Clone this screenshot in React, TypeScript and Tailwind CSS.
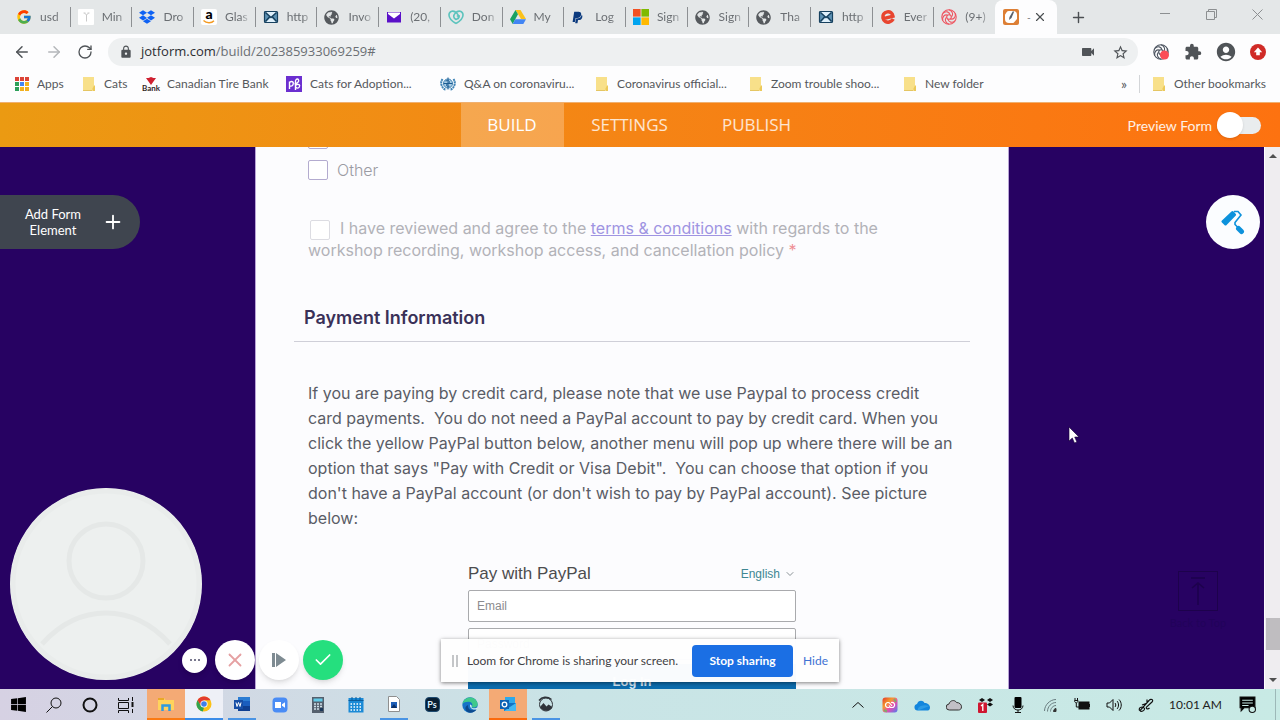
import type { ReactNode } from "react";
import { FcGoogle } from "react-icons/fc";
import { FaDropbox, FaGlobeAmericas, FaPaypal, FaWindows } from "react-icons/fa";
import {
  MdAccountCircle,
  MdExtension,
  MdLock,
  MdStarBorder,
  MdVideocam,
} from "react-icons/md";
import { ArrowLeft, ArrowRight, Check, ChevronDown, Plus, RotateCw, X } from "lucide-react";

function Mail() {
  return (
    <svg viewBox="0 0 16 16" className="size-4">
      <rect x="1.500" y="2.500" width="13" height="11" rx="1" fill="#5f93b5" />
      <path d="M2.500 3h11L8 8.500zM2.500 13h11L8 8z" fill="#dff0fb" />
      <path d="m2.500 3.500 5.500 5 5.500-5M2.500 12.500l4-4.500M13.500 12.500l-4-4.500" fill="none" stroke="#17415f" strokeWidth="1.500" />
      <rect x="1.500" y="2.500" width="13" height="11" rx="1" fill="none" stroke="#17415f" strokeWidth="1.200" />
    </svg>
  );
}

function Amazon() {
  return (
    <span className="flex size-4 flex-col items-center rounded-xs bg-white">
      <span className="h-[11px] text-[14px] leading-[9px] font-black text-black">a</span>
      <svg viewBox="0 0 12 4" className="h-1 w-3" fill="none" stroke="#f39a21" strokeWidth="1.400">
        <path d="M.500.500c3 3 8 3 10.500.300" />
      </svg>
    </span>
  );
}

function YahooMail() {
  return (
    <svg viewBox="0 0 16 16" className="size-4">
      <rect x="1" y="3" width="14" height="10.500" fill="#5a10c8" />
      <path d="M2 3.500h12v1.500L8 9.400 2 5z" fill="#fff" />
    </svg>
  );
}

function Plant() {
  return (
    <svg viewBox="0 0 16 16" className="size-4">
      <rect width="16" height="16" rx="1" fill="#fff" />
      <path d="M8.500 12.500V6M8.500 6 6.500 4M8.500 6l2-2M5.500 4h2M9.500 4h2" stroke="#c9c9c9" fill="none" />
    </svg>
  );
}

function Heart() {
  return (
    <svg viewBox="0 0 16 16" className="size-4" fill="none" stroke="#5cc3bd" strokeWidth="1.600">
      <path d="M8 14.500C3 11.500.800 8.600 1 5.600 1.300 2 5.600.800 8.600 4c2.400 2.600 2.600 4.600 1 6" />
      <path d="M8 14.500c5-3 7.200-5.900 7-8.900C14.700 2 10.400.800 7.400 4c-2.400 2.600-2.200 5 .600 6.500 1.600-.400 3-1.500 3.200-3.500H8.800" />
    </svg>
  );
}

function Drive() {
  return (
    <svg viewBox="0 0 16 16" className="size-4">
      <path d="M5.500 1h5L16 10h-5z" fill="#fbc21c" />
      <path d="M5.500 1 8 5.300 2.700 15 0 10.300z" fill="#1aa260" />
      <path d="M5.300 10.200H16L13.300 15H2.700z" fill="#4285f4" />
    </svg>
  );
}

function Squares() {
  return (
    <svg viewBox="0 0 16 16" className="size-4">
      <path d="M0 0h7.600v7.600H0z" fill="#f25022" />
      <path d="M8.400 0H16v7.600H8.400z" fill="#7fba00" />
      <path d="M0 8.400h7.600V16H0z" fill="#00a4ef" />
      <path d="M8.400 8.400H16V16H8.400z" fill="#ffb900" />
    </svg>
  );
}

function Loom({ color, dot }: { color: string; dot?: boolean }) {
  return (
    <svg viewBox="0 0 16 16" className="size-4" fill="none" stroke={color} strokeWidth="1.100">
      <circle cx="8" cy="8" r="7.200" />
      <path d="M8 .800c4 1.500 4.500 5 2.500 7.200M14.200 4.400c1 4-2 6.500-4.900 5.400M14.200 11.600c-3 3-6.700 1.600-7.200-1.400M8 15.200c-4-1.500-4.500-5-2.500-7.200M1.800 11.600c-1-4 2-6.500 4.900-5.400M1.800 4.400c3-3 6.700-1.600 7.200 1.400" />
      <circle cx="8" cy="8" r="2.300" />
      {dot && <circle cx="11.500" cy="11" r="4.500" fill="#fb4d57" stroke="none" />}
    </svg>
  );
}

function Eventbrite() {
  return (
    <svg viewBox="0 0 16 16" className="size-4" fill="none" stroke="#e8452f" strokeWidth="3.400">
      <path d="M2.500 9.800 13 7.200C12.500 4 10 2.300 7.300 2.800 4 3.400 2.300 6 2.900 9c.700 3.200 3.600 4.700 6.400 4 1.900-.500 3.200-1.500 4-3" />
    </svg>
  );
}

function Jotform() {
  return (
    <svg viewBox="0 0 16 16" className="size-4">
      <rect width="16" height="16" rx="2" fill="#dd7f35" />
      <rect x="2" y="2" width="12" height="12" rx="4" fill="#fff" />
      <path d="M10 2 6.500 8 6 11l2.500-2L11 3z" fill="#59606a" />
      <path d="M2 2h2.500L2 5.500zM14 14h-3.500l3.500-4z" fill="#dd7f35" />
    </svg>
  );
}

function Folder() {
  return (
    <svg viewBox="0 0 14 16" className="h-4 w-3.5">
      <path d="M1 1h11v13.500H1z" fill="#f8e08a" />
      <path d="M12 9.500h1V15h-2.500v-2.500z" fill="#ecc95a" />
      <path d="M1 14.500h9" stroke="#e5c663" />
    </svg>
  );
}

function AppsGrid() {
  const colors = ["#dc4437", "#dc4437", "#dc4437", "#2da05a", "#4285f4", "#f2b01e", "#2da05a", "#f2b01e", "#f2b01e"];
  return (
    <svg viewBox="0 0 14 14" className="size-3.5">
      {colors.map((c, i) => (
        <rect key={i} x={(i % 3) * 5} y={Math.floor(i / 3) * 5} width="4" height="4" fill={c} />
      ))}
    </svg>
  );
}

function TireBank() {
  return (
    <span className="flex w-4 flex-col items-center">
      <svg viewBox="0 0 10 8" className="h-2 w-2.5">
        <path d="M0 1h2.500L5 0l2.500 1H10L5 8z" fill="#cf2030" />
      </svg>
      <span className="text-[8px] leading-[7px] font-bold text-[#33251f]">Bank</span>
    </span>
  );
}

function Petfinder() {
  return (
    <svg viewBox="0 0 16 16" className="size-4">
      <rect width="16" height="16" fill="#6b2fd0" />
      <g fill="none" stroke="#fff" strokeWidth="1.400">
        <path d="M3.500 13V5.500M3.500 6.300c3-2 4.500 0 3.500 2.500-.500 1.300-2 1.500-3.500 1" />
        <path d="M9.500 14V5.500c0-3.500 4-3 3 0-.500 1.500-2 2-4 2.500M9.800 9c3-1.500 4.500 0 3.500 2-.800 1.500-2.500 1.300-3.500.300" />
      </g>
    </svg>
  );
}

function Who() {
  return (
    <svg viewBox="0 0 16 16" className="size-4" fill="none" stroke="#3f83b5">
      <circle cx="8" cy="7.500" r="4.500" fill="#a9cde5" />
      <path d="M2.500 3C0 6.500 1 11.500 6 14M13.500 3c2.500 3.500 1.500 8.500-3.500 11" strokeWidth="2" strokeDasharray="2 .600" />
      <path d="M8 1.500v12M5.500 5c3-1 4 0 4 1.200S6.500 7.500 6.500 9 8 10.300 9.500 10.300M3.500 7.500h9" stroke="#1c5c92" />
    </svg>
  );
}

const tabs: { title: string; icon: ReactNode }[] = [
  { title: "usd", icon: <FcGoogle className="size-4" /> },
  { title: "Min", icon: <Plant /> },
  { title: "Dro", icon: <FaDropbox className="size-4 text-[#0f62f4]" /> },
  { title: "Glas", icon: <Amazon /> },
  { title: "http", icon: <Mail /> },
  { title: "Invo", icon: <FaGlobeAmericas size={15} className="text-[#55595d]" /> },
  { title: "(20,", icon: <YahooMail /> },
  { title: "Don", icon: <Heart /> },
  { title: "My", icon: <Drive /> },
  { title: "Log", icon: <FaPaypal size={13} className="text-[#0b3a7e]" /> },
  { title: "Sign", icon: <Squares /> },
  { title: "Sign", icon: <FaGlobeAmericas size={15} className="text-[#55595d]" /> },
  { title: "Tha", icon: <FaGlobeAmericas size={15} className="text-[#55595d]" /> },
  { title: "http", icon: <Mail /> },
  { title: "Ever", icon: <Eventbrite /> },
  { title: "(9+)", icon: <Loom color="#ee5560" /> },
];

const bookmarks: { title: string; icon: ReactNode; width: string }[] = [
  { title: "Apps", icon: <AppsGrid />, width: "w-[67px]" },
  { title: "Cats", icon: <Folder />, width: "w-[61px]" },
  { title: "Canadian Tire Bank", icon: <TireBank />, width: "w-[143px]" },
  { title: "Cats for Adoption...", icon: <Petfinder />, width: "w-[154px]" },
  { title: "Q&A on coronaviru...", icon: <Who />, width: "w-[155px]" },
  { title: "Coronavirus official...", icon: <Folder />, width: "w-[154px]" },
  { title: "Zoom trouble shoo...", icon: <Folder />, width: "w-[154px]" },
  { title: "New folder", icon: <Folder />, width: "w-[120px]" },
];

function TabStrip() {
  return (
    <div className="flex h-[34px] shrink-0 bg-[#e4e7e8] pl-[9px] text-[#6b6f73]">
      <div className="flex min-w-0 flex-[0_1_986px] items-center">
        {tabs.map((tab, i) => (
          <button
            key={i}
            className={`flex h-5 min-w-0 flex-1 items-center pl-[7px] text-[12px] ${
              i < tabs.length - 1 ? "border-r border-[#8d9093]" : ""
            }`}
          >
            <span className="flex w-6 shrink-0">{tab.icon}</span>
            <span className="w-[26px] mask-r-from-60% text-left whitespace-nowrap">{tab.title}</span>
          </button>
        ))}
      </div>
      <div className="flex w-[62px] shrink-0 items-center rounded-t-lg bg-[#fdfdfe] pl-2">
        <Jotform />
        <span className="w-[14px] pl-2 text-[10px]">-</span>
        <button aria-label="Close tab" className="text-[#4b4f52]">
          <X size={14} strokeWidth={2} />
        </button>
      </div>
      <button aria-label="New tab" className="ml-[13px] text-[#4b4f52]">
        <Plus size={17} strokeWidth={2} />
      </button>
      <div className="ml-auto flex h-7 items-center text-[#8c8f91]">
        <button aria-label="Minimize" className="flex w-[46px] justify-center">
          <svg viewBox="0 0 10 10" className="size-[10px]" stroke="currentColor"><path d="M0 4.500h10" /></svg>
        </button>
        <button aria-label="Restore" className="flex w-[46px] justify-center">
          <svg viewBox="0 0 11 11" className="size-[11px]" fill="none" stroke="currentColor"><path d="M.500 2.500h8v8h-8zM2.500 2.500v-2h8v8h-2" /></svg>
        </button>
        <button aria-label="Close" className="flex w-[46px] justify-center">
          <svg viewBox="0 0 11 11" className="size-[11px]" stroke="currentColor"><path d="m.500.500 10 10M10.500.500l-10 10" /></svg>
        </button>
      </div>
    </div>
  );
}

function Toolbar() {
  return (
    <div className="flex h-9 shrink-0 items-center bg-[#fdfdfe] pr-[14px] pl-[13px] text-[#505458]">
      <button aria-label="Back" className="w-8"><ArrowLeft size={18} /></button>
      <button aria-label="Forward" className="w-8 text-[#b4b7ba]"><ArrowRight size={18} /></button>
      <button aria-label="Reload" className="w-[31px]"><RotateCw size={16} /></button>
      <div className="flex h-7 flex-1 items-center rounded-full bg-[#eef0f1] pr-[9px] pl-[11px]">
        <MdLock size={14} className="mr-2" />
        <span className="flex-1 font-['Open_Sans',sans-serif] text-[13px] text-[#6b6f74]">
          <span className="text-[#2b2e32]">jotform.com</span>/build/202385933069259#
        </span>
        <MdVideocam size={16} className="mr-4" />
        <MdStarBorder size={17} />
      </div>
      <div className="flex items-center gap-[15px] pl-[15px]">
        <Loom color="#4d5561" dot />
        <MdExtension size={18} />
        <MdAccountCircle size={22} className="-mx-0.5" />
        <svg viewBox="0 0 16 16" className="size-4">
          <circle cx="8" cy="8" r="8" fill="#d02b27" />
          <path d="m8 3.500 4.200 4.700H9.800v3H6.200v-3H3.800z" fill="#fff" />
        </svg>
      </div>
    </div>
  );
}

function BookmarkBar() {
  return (
    <div className="flex h-8 shrink-0 items-center bg-[#fdfdfe] pr-[14px] pb-1 pl-[15px] text-[12px] text-[#55585c]">
      {bookmarks.map((b) => (
        <a key={b.title} href="#" className={`flex shrink-0 items-center gap-2 whitespace-nowrap ${b.width}`}>
          {b.icon}
          {b.title}
        </a>
      ))}
      <button aria-label="More bookmarks" className="ml-auto w-[18px] text-left text-[14px] leading-4">»</button>
      <a href="#" className="flex items-center gap-2 border-l border-[#d3d5d8] pl-3 whitespace-nowrap">
        <Folder />
        Other bookmarks
      </a>
    </div>
  );
}

function BuilderHeader() {
  return (
    <header className="flex h-[45px] shrink-0 items-center border-t border-[#f0b070] bg-linear-to-r from-[#eb9a12] via-[#f58415] to-[#fd7210] text-white">
      <div className="flex-1" />
      <nav className="flex h-full items-center pl-[17px] font-['Open_Sans',sans-serif] text-[17px]">
        <a href="#" className="flex h-full w-[103px] items-center justify-center bg-white/25">BUILD</a>
        <a href="#" className="flex h-full w-[132px] items-center justify-center text-white/80">SETTINGS</a>
        <a href="#" className="flex h-full w-[122px] items-center justify-center text-white/80">PUBLISH</a>
      </nav>
      <div className="flex flex-1 justify-end pr-[19px]">
        <label className="flex items-center gap-[5px] text-[14px] text-white/90">
          Preview Form
          <input type="checkbox" className="peer sr-only" />
          <span className="flex h-[17px] w-11 items-center rounded-full bg-[#e9ecee]">
            <span className="size-[26px] shrink-0 rounded-full bg-white shadow" />
          </span>
        </label>
      </div>
    </header>
  );
}

const box = "size-5 shrink-0 appearance-none rounded-xs border bg-white";

function FormCard() {
  return (
    <section className="mx-auto h-full w-[754px] overflow-hidden border-x border-[#b9a4d6] bg-[#fcfcfe] px-[38px] font-['Inter',sans-serif]">
      <div className="-mt-[18px] flex flex-col gap-[11px] pl-[14px] text-[16px] leading-5 font-light text-[#9b9ba3]">
        <input type="checkbox" aria-label="Option" className={`${box} border-[#b3abcf]`} />
        <label className="flex items-center gap-[9px]">
          <input type="checkbox" className={`${box} border-[#b3abcf]`} />
          Other
        </label>
      </div>
      <p className="mt-[38px] pl-[14px] text-[16px] leading-[21px] text-[#b2b2b8]">
        <input id="agree" type="checkbox" className={`${box} mr-[10px] ml-0.5 border-[#dcdce2] align-middle`} />
        <label htmlFor="agree">
          I have reviewed and agree to the{" "}
          <a href="#" className="text-[#9f94e2] underline">terms &amp; conditions</a> with regards to the
          <br />
          workshop recording, workshop access, and cancellation policy <span className="text-[#ef8f95]">*</span>
        </label>
      </p>
      <h2 className="mt-[45px] border-b border-[#cfcfd8] pb-[11px] pl-[10px] text-[18px] leading-6 font-semibold text-[#3a3158]">
        Payment Information
      </h2>
      <p className="mt-[39px] pl-[14px] text-[16px] leading-[25px] whitespace-pre-wrap text-[#5a5c66]">
        {`If you are paying by credit card, please note that we use Paypal to process credit
card payments.  You do not need a PayPal account to pay by credit card. When you
click the yellow PayPal button below, another menu will pop up where there will be an
option that says "Pay with Credit or Visa Debit".  You can choose that option if you
don't have a PayPal account (or don't wish to pay by PayPal account). See picture
below:`}
      </p>
      <div className="mx-auto mt-[29px] w-[328px] font-['Liberation_Sans',sans-serif]">
        <div className="flex h-7 items-center justify-between">
          <h3 className="text-[17px] text-[#4c4c4e]">Pay with PayPal</h3>
          <button className="flex items-center gap-1 text-[12px] text-[#3f8793]">
            English <ChevronDown size={12} className="text-[#8a9296]" />
          </button>
        </div>
        <input aria-label="Email" placeholder="Email" className="mt-[2px] block h-8 w-full rounded-xs border border-[#a9aaad] bg-white px-2 text-[12px] placeholder:text-[#8b8b8e]" />
        <input aria-label="Password" type="password" placeholder="Password" className="mt-[6px] block h-8 w-full rounded-xs border border-[#a9aaad] bg-white px-2 text-[12px] placeholder:text-[#8b8b8e]" />
        <button className="mt-1 h-9 w-full bg-[#0b6cae] text-[13px] font-bold text-[#d4e5f2]">Log In</button>
      </div>
    </section>
  );
}

function LoomControls() {
  const round = "flex items-center justify-center rounded-full shadow-md";
  return (
    <>
      <svg viewBox="0 0 192 192" className="absolute bottom-[9px] left-[10px] size-48">
        <clipPath id="bubble"><circle cx="96" cy="96" r="96" /></clipPath>
        <g clipPath="url(#bubble)" fill="none" stroke="#e5e8e7" strokeWidth="5">
          <rect width="192" height="192" fill="#edf0ef" stroke="none" />
          <circle cx="96" cy="96" r="93" stroke="#e9eceb" />
          <circle cx="96" cy="73" r="37" />
          <path d="M32 156c18-20 38-31 64-31s46 11 64 31" />
        </g>
      </svg>
      <div className="absolute bottom-[9px] left-[182px] flex items-center gap-1">
        <button aria-label="More" className={`${round} mr-1 size-[25px] gap-0.5 bg-white`}>
          <span className="size-0.5 rounded-full bg-[#4e4c68]" />
          <span className="size-0.5 rounded-full bg-[#4e4c68]" />
          <span className="size-0.5 rounded-full bg-[#4e4c68]" />
        </button>
        <button aria-label="Cancel" className={`${round} size-10 bg-white text-[#e5a0a2]`}><X size={22} /></button>
        <button aria-label="Pause" className={`${round} size-10 bg-white`}>
          <svg viewBox="0 0 14 14" className="size-3.5 text-[#7e8b92]" fill="currentColor"><path d="M0 0h3v14H0zM4 0l10 7-10 7z" /></svg>
        </button>
        <button aria-label="Finish" className={`${round} size-10 bg-[#25df7e] text-white`}><Check size={20} /></button>
      </div>
    </>
  );
}

function ShareNotice() {
  return (
    <div className="absolute bottom-[7px] left-1/2 flex h-[43px] w-[398px] -translate-x-1/2 items-center bg-[#fefefe]/98 px-[11px] text-[12px] whitespace-nowrap shadow-[0_1px_4px_rgba(0,0,0,0.5)]">
      <span className="mr-[9px] h-3 w-[6px] border-x-2 border-[#c4c6c8]" />
      <span className="text-[#3f4145]">Loom for Chrome is sharing your screen.</span>
      <button className="ml-auto h-8 w-[101px] rounded bg-[#1b6fe4] font-bold text-white">Stop sharing</button>
      <a href="#" className="ml-[10px] text-[#3f72d3]">Hide</a>
    </div>
  );
}

function Scrollbar() {
  return (
    <div className="flex w-4 shrink-0 flex-col items-center justify-between border-l border-white bg-[#efedf0] py-1.5">
      <svg viewBox="0 0 8 5" className="h-[5px] w-2"><path d="m0 5 4-4 4 4z" fill="#505050" /></svg>
      <div className="mt-auto mb-7 h-8 w-[14px] bg-[#bfbdc0]" />
      <svg viewBox="0 0 8 5" className="h-[5px] w-2"><path d="m0 0 4 4 4-4z" fill="#505050" /></svg>
    </div>
  );
}

function Builder() {
  return (
    <main className="relative flex min-h-0 flex-1 bg-[#270262]">
      <div className="min-w-0 flex-1"><FormCard /></div>
      <Scrollbar />
      <button className="absolute top-12 left-0 flex h-[54px] w-[140px] items-center gap-5 rounded-r-full bg-[#3f454f] pl-[22px] text-[13px] leading-4 text-white">
        <span className="w-[62px] text-center">Add Form Element</span>
        <Plus size={22} className="-ml-0.5 shrink-0" />
      </button>
      <button aria-label="Form designer" className="absolute top-12 right-5 flex size-[54px] items-center justify-center rounded-full bg-[#fbfdff]">
        <svg viewBox="0 0 24 26" className="h-[26px] w-6">
          <path d="M2 12.500 11.500 3.500l2 2.200L4.500 15z" fill="#0d92dc" stroke="#0d92dc" strokeWidth="3" strokeLinejoin="round" />
          <path d="M13 2.500h4l3 3.500-6 7.500v2l3 3" fill="none" stroke="#0d92dc" strokeWidth="1.600" />
          <path d="m17.500 19.500 3 3" stroke="#0d92dc" strokeWidth="5" strokeLinecap="round" />
        </svg>
      </button>
      <div className="absolute right-[50px] bottom-[58px] flex w-16 flex-col items-center gap-1 text-[11px] text-[#22025a]">
        <button aria-label="Back to top" className="flex size-10 items-center justify-center border border-[#1d024c]">
          <svg viewBox="0 0 14 28" className="h-7 w-3.5" fill="none" stroke="#1d024c" strokeWidth="1.500"><path d="M0 1h14M7 28V6M1 11l6-5 6 5" /></svg>
        </button>
        Back to Top
      </div>
      <LoomControls />
      <ShareNotice />
      <svg viewBox="0 0 12 18" className="absolute top-[279px] right-[200px] h-[18px] w-3">
        <path d="M1 1v14l3.300-3 2.200 5 2.400-1-2.200-5H11z" fill="#fff" stroke="#150038" strokeWidth=".6" />
      </svg>
    </main>
  );
}

function Tile({ children, className = "" }: { children: ReactNode; className?: string }) {
  return <button className={`flex h-full w-[38px] shrink-0 items-center justify-center ${className}`}>{children}</button>;
}

// running apps show a short bar under their icon
function RunningTile({ children }: { children: ReactNode }) {
  return (
    <button className="mx-[5px] flex h-full w-7 shrink-0 items-center justify-center border-b-2 border-[#4a94e4]">
      {children}
    </button>
  );
}

function Glyph({ children, color = "#111", size = "size-4" }: { children: ReactNode; color?: string; size?: string }) {
  return <svg viewBox="0 0 16 16" className={size} fill="none" stroke={color}>{children}</svg>;
}

function Taskbar() {
  return (
    <footer className="flex h-[31px] shrink-0 items-center bg-linear-to-r from-[#d6d1e3] via-[#c9e4e6] via-45% to-[#c8eae5]">
      <div className="flex h-full items-center">
        <button aria-label="Start" className="flex w-9 justify-center"><FaWindows size={17} className="text-black" /></button>
        <button aria-label="Search" className="flex w-9 justify-center">
          <Glyph><circle cx="10" cy="6" r="5" /><path d="M6.500 9.500.500 15.500" /></Glyph>
        </button>
        <button aria-label="Cortana" className="flex w-9 justify-center">
          <Glyph><circle cx="8" cy="8" r="6.500" strokeWidth="2" /></Glyph>
        </button>
        <button aria-label="Task view" className="flex w-9 justify-center">
          <Glyph><path d="M.500 1v2.500h10V1M.500 5.500h10v6h-10zM.500 16v-2.500h10V16M14.500 0v4M14.500 12v4" /><path d="M14.500 5v5" strokeWidth="2" /></Glyph>
        </button>
      </div>
      <div className="ml-[3px] flex h-full items-center">
        <Tile className="border-b-2 border-[#fb7a13] bg-[#f4aa75]">
          <Glyph><path d="M0 2h6l1.500 2H16v10H0z" fill="#ffd35c" stroke="none" /><path d="M0 2h6v2H0z" fill="#e9a928" stroke="none" /><path d="M4.500 15V9.500h7V15" stroke="#2e9be0" strokeWidth="2.500" /></Glyph>
        </Tile>
        <Tile className="border-b-2 border-[#3c8ce8] bg-[#eef0f7]">
          <Glyph>
            <g stroke="none">
              <circle cx="8" cy="8" r="7.500" fill="#fbc116" />
              <path d="M1.500 4.300A7.500 7.500 0 0 1 14.500 4.300H8L4.800 9.800z" fill="#e33b2e" />
              <path d="M1.500 4.300 5 10l3 1.500-1.200 4A7.500 7.500 0 0 1 1.500 4.300" fill="#31a350" />
              <circle cx="8" cy="8" r="3.600" fill="#fff" /><circle cx="8" cy="8" r="2.800" fill="#3f7fe8" />
            </g>
          </Glyph>
        </Tile>
        <RunningTile>
          <Glyph><g stroke="none"><path d="M4 1h12v14H4z" fill="#2b7cd3" /><path d="M4 5h12v5H4z" fill="#1a5dbe" /><path d="M4 10h12v5H4z" fill="#103f91" /><path d="M0 4h9v9H0z" fill="#174ea6" /></g><path d="m2 6.500 1 4 1.500-4 1.500 4 1-4" stroke="#fff" /></Glyph>
        </RunningTile>
        <Tile>
          <Glyph><rect x=".500" y=".500" width="15" height="15" rx="4" fill="#4a8cf5" stroke="none" /><path d="M3 5h6v6H3zM10 7.200l3-2v5.600l-3-2z" fill="#fff" stroke="none" /></Glyph>
        </Tile>
        <Tile>
          <Glyph><rect x="2" width="12" height="16" fill="#55606e" stroke="none" /><path d="M3.500 1.500h9v3h-9z" fill="#63cbe8" stroke="none" /><path d="M4 7h2m1 0h2m1 0h2M4 9.500h2m1 0h2m1 0h2M4 12h2m1 0h2" stroke="#cfe0ea" strokeWidth="1.600" /><path d="M10 14v-3h3v3z" fill="#1c3759" stroke="none" /></Glyph>
        </Tile>
        <Tile>
          <Glyph><path d="M.500 1h15v14.500H.500z" fill="#1b8ad6" stroke="none" /><path d="M.500 3.500h15M4 0v3M8 0v3M12 0v3" stroke="#0c5d9c" /><path d="M2.500 7h12M2.500 10h12M2.500 13h12" stroke="#fff" strokeWidth="1.500" strokeDasharray="1.500 1.500" /></Glyph>
        </Tile>
        <RunningTile>
          <Glyph><path d="M2.500.500h8l3 3v12h-11z" fill="#fff" stroke="#8f8f8f" /><path d="M5 6h6v6H5z" fill="#1d5fb8" stroke="none" /><path d="m5 12 3-4 3 4z" fill="#0b2f66" stroke="none" /></Glyph>
        </RunningTile>
        <Tile>
          <span className="flex size-[15px] items-center justify-center rounded-sm border border-[#1d4a70] bg-[#071e33] text-[9px] font-bold text-[#dff0ff]">Ps</span>
        </Tile>
        <Tile>
          <Glyph><g stroke="none"><circle cx="8" cy="8" r="7.700" fill="#1673c8" /><path d="M.500 7C1.500-1 14-2 15.700 7c.300 3-3.200 4.500-6 3 1.500-2.500.500-5-3-5.200C4 4.700 1.500 5.500.500 7" fill="#3fc98b" /><path d="M6.200 8c-1 4 3 6.500 8.300 4.500C13 15 8 17 5 14.500S3.500 8.500 6.200 8" fill="#0c4a8e" /><path d="M8 7.500c2 .500 2 2 1.500 3 2 1.500 5 1 6.300-1L15 12c-3 1.500-7.500 0-7-4.500" fill="#d5efef" /></g></Glyph>
        </Tile>
        <Tile className="border-b-2 border-[#fb6a0c] bg-[#f4aa75]">
          <Glyph><g stroke="none"><path d="M5 1h10v8H5z" fill="#2ea8ea" /><path d="M4 7h12v8H4z" fill="#1272c4" /><path d="m4 15 12-8v8z" fill="#42b8f2" /><path d="M0 4h9v9H0z" fill="#0d62b5" /></g><circle cx="4.500" cy="8.500" r="2.300" stroke="#fff" strokeWidth="1.300" /></Glyph>
        </Tile>
        <RunningTile>
          <Glyph>
            <circle cx="8" cy="8.500" r="6.500" stroke="#30343a" />
            <path d="M2 11 5.500 7l3 3.500 2-2 4 2.500c-2 5-10 5-12.500 0" fill="#30343a" stroke="none" />
            <path d="M1 4.500C4 .800 9 0 13.500 3.500" stroke="#30343a" strokeWidth="1.500" />
          </Glyph>
        </RunningTile>
      </div>
      <div className="ml-auto flex h-full items-center pr-1 text-[#222]">
        <div className="flex [&>button]:w-8">
          <Tile><Glyph><path d="m2.500 10.500 5.500-5 5.500 5" /></Glyph></Tile>
          <Tile>
            <svg viewBox="0 0 16 16" className="size-4">
              <defs>
                <linearGradient id="cc" x1="0" y1="0" x2="1" y2="1">
                  <stop stopColor="#e3372c" />
                  <stop offset=".35" stopColor="#f59a2c" />
                  <stop offset=".6" stopColor="#e84bb0" />
                  <stop offset="1" stopColor="#4f7df0" />
                </linearGradient>
              </defs>
              <rect x=".500" y=".500" width="15" height="15" rx="3" fill="url(#cc)" />
              <path d="M2 13 5 14.500M12 2l2 3" stroke="#58c95a" strokeWidth="2" opacity=".7" />
              <path d="M7.500 10.500H6a2.500 2.500 0 1 1 2-4l2 2.500M9 5.500a2.600 2.600 0 1 1 1 5H8.500L7 8.500" fill="none" stroke="#fff" strokeWidth="1.200" />
            </svg>
          </Tile>
          <Tile><Glyph><path d="M3.500 13.500A3.300 3.300 0 0 1 3 7c1-4 6-4.500 7.500-1 3 0 5.500 2 5.500 4.500s-1.500 3-3 3z" fill="#1386dd" stroke="none" /><path d="M4 13.500c-1.500-3 4-7 11.500-4.500" fill="#45b0f0" stroke="none" opacity=".5" /></Glyph></Tile>
          <Tile><Glyph color="#333"><path d="M3.500 13A3 3 0 0 1 3 7c1-4 6-4.500 7.500-1.500 3 0 5 2 5 4.300S14 13 12.500 13z" fill="#c2bfc6" /></Glyph></Tile>
          <Tile>
            <Glyph><path d="m4 1 3 2-3 2-3-2zM12 1l3 2-3 2-3-2zM12 5.500l3 2-3 2-3-2z" fill="#111" stroke="none" /><rect y="5.500" width="9" height="10.500" rx="1" fill="#cf1630" stroke="none" /><path d="M3 9 4.800 7.500V14" stroke="#fff" strokeWidth="1.300" /></Glyph>
          </Tile>
          <Tile><Glyph><rect x="4.500" width="7" height="11" rx="1" fill="#000" stroke="none" /><path d="M3 8.500c0 6 10 6 10 0M8 13v2.500M5 15.500h6" /></Glyph></Tile>
          <Tile><Glyph color="#6a7d80"><path d="M2.500 14C2.500 8 8 2.500 14 2.500M5.500 14.500c0-5 4-9 8.500-9M8.500 14.500c0-3 2.500-6 5.500-6" /><path d="M11.500 14.500c0-1.500 1-3 2.500-3v3z" fill="#333" stroke="#333" /></Glyph></Tile>
          <Tile><Glyph><rect x="5" y="5" width="10" height="7" fill="#111" /><path d="M15.500 7v3M.500 3.500c0 3 3.500 3 3.500 0zM1 1v2M3.500 1v2M2.300 6v4h3" /></Glyph></Tile>
          <Tile><Glyph><path d="M1 6h2.500L7 2.500v11L3.500 10H1zM9 6c1 1 1 3 0 4M11 4c2 2 2 6 0 8M13 2.500c3 3 3 8 0 11" /></Glyph></Tile>
          <Tile><Glyph><path d="M1.500 13.500c-1.500-4 4-4 5-2 .500 2-3.500 4-4.500 2L11 3.500c2-2.500 5-.500 3 1.500L8.500 10c-1 2 1.500 2.500 3 1M4 8l4-1.500M9 5V2.500" strokeWidth="1.200" /></Glyph></Tile>
        </div>
        <time className="w-[61px] pl-[7px] text-[12px] whitespace-nowrap">10:01 AM</time>
        <button aria-label="Notifications" className="flex w-[48px] justify-center">
          <Glyph size="size-[17px]"><path d="M1 1h14v10H5l-3 3v-3H1z" fill="#000" /><path d="M3 4h10M3 6.500h10M3 9h6" stroke="#c8eae5" /><circle cx="12.500" cy="12.500" r="3" fill="#c8eae5" /></Glyph>
        </button>
        <span className="ml-1 h-full border-l border-[#9db8b8]" />
      </div>
    </footer>
  );
}

export default function App() {
  return (
    <div className="flex h-screen flex-col overflow-hidden font-['Lato','Open_Sans',sans-serif]">
      <TabStrip />
      <Toolbar />
      <BookmarkBar />
      <BuilderHeader />
      <Builder />
      <Taskbar />
    </div>
  );
}
